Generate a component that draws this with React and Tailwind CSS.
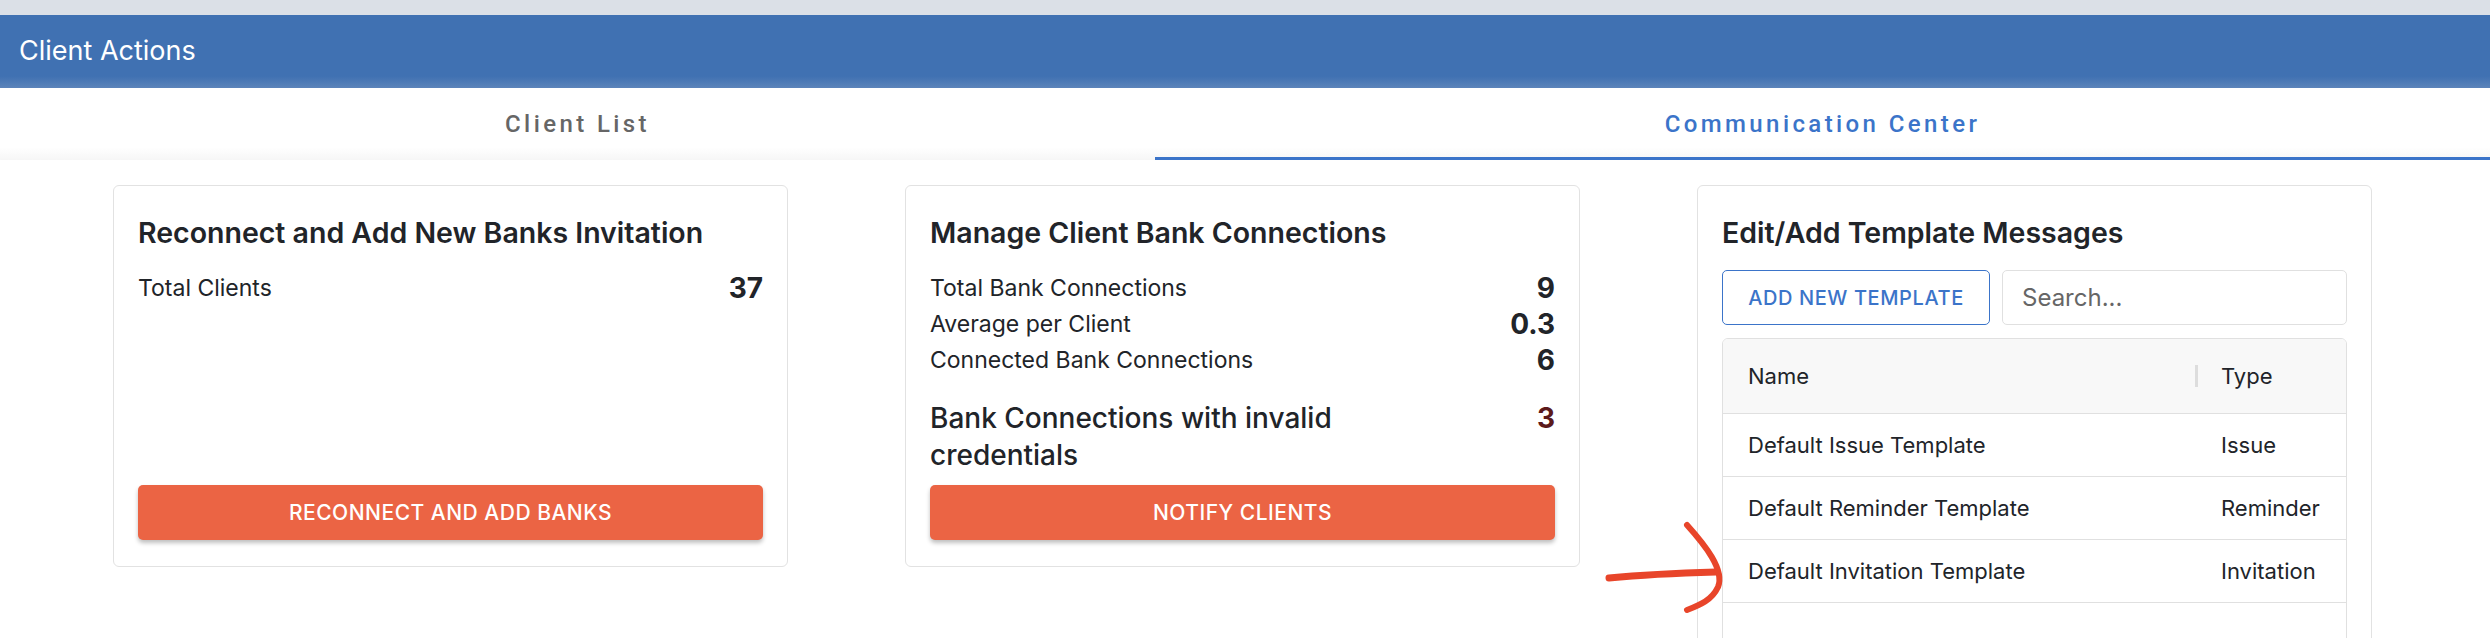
import React, { useState } from 'react';

const stats = [
  { label: 'Total Bank Connections', value: '9' },
  { label: 'Average per Client', value: '0.3' },
  { label: 'Connected Bank Connections', value: '6' },
];

const templates = [
  { name: 'Default Issue Template', type: 'Issue' },
  { name: 'Default Reminder Template', type: 'Reminder' },
  { name: 'Default Invitation Template', type: 'Invitation' },
];

function ActionButton({ children }) {
  return (
    <button className="mt-auto h-[55px] w-full rounded-[5px] bg-[#eb6444] text-[21px] font-medium tracking-[0.5px] text-white shadow-[0_3px_4px_rgba(0,0,0,0.25)]">
      {children}
    </button>
  );
}

function Card({ title, className, children }) {
  return (
    <div className={`flex flex-col rounded-[6px] border border-[#e2e2e2] bg-white px-[24px] pt-[30px] ${className}`}>
      <h3 className="mb-[20px] text-[28.5px] font-semibold leading-[34px] text-[#212429]">{title}</h3>
      {children}
    </div>
  );
}

// hand-drawn red arrow pointing at the invitation row
function ArrowMark() {
  return (
    <svg className="pointer-events-none absolute left-[1600px] top-[515px]" width="130" height="105" viewBox="0 0 130 105" fill="none">
      <path d="M9 63 C40 60 80 58 116 57" stroke="#e8452a" strokeWidth="7" strokeLinecap="round" />
      <path d="M87 10 C105 30 125 55 118 72 C112 85 100 90 87 95" stroke="#e8452a" strokeWidth="6" strokeLinecap="round" />
    </svg>
  );
}

export default function App() {
  const [tab, setTab] = useState(1);
  const [search, setSearch] = useState('');

  return (
    <div className="relative min-h-screen bg-white font-['Inter',sans-serif] text-[#212429]">
      <div className="h-[15px] bg-[#dbe0e7]" />
      <header className="flex h-[73px] items-center bg-[linear-gradient(to_bottom,#4071b2_84%,#5c84ba)] px-[19px]">
        <h1 className="text-[27px] font-normal text-white">Client Actions</h1>
      </header>

      <nav className="flex h-[72px] bg-[linear-gradient(to_bottom,#ffffff_82%,#f6f6f6)] font-['Roboto',sans-serif]">
        <button
          onClick={() => setTab(0)}
          className={`relative w-[1155px] text-[24px] font-medium tracking-[3.4px] ${tab === 0 ? 'text-[#3b74c9]' : 'text-[#666666]'}`}
        >
          Client List
          {tab === 0 && <span className="absolute inset-x-0 bottom-0 h-[3px] bg-[#3b74c9]" />}
        </button>
        <button
          onClick={() => setTab(1)}
          className={`relative flex-1 text-[24px] font-medium tracking-[3.4px] ${tab === 1 ? 'text-[#3b74c9]' : 'text-[#666666]'}`}
        >
          Communication Center
          {tab === 1 && <span className="absolute inset-x-0 bottom-0 h-[3px] bg-[#3b74c9]" />}
        </button>
      </nav>

      <main className="flex items-start gap-[117px] pl-[113px] pt-[25px]">
        <Card title="Reconnect and Add New Banks Invitation" className="h-[382px] w-[675px] pb-[26px]">
          <div className="flex h-[36px] items-center justify-between">
            <span className="text-[23px]">Total Clients</span>
            <span className="text-[28px] font-bold">37</span>
          </div>
          <ActionButton>RECONNECT AND ADD BANKS</ActionButton>
        </Card>

        <Card title="Manage Client Bank Connections" className="h-[382px] w-[675px] pb-[26px]">
          {stats.map((s) => (
            <div key={s.label} className="flex h-[36px] items-center justify-between">
              <span className="text-[23px]">{s.label}</span>
              <span className="text-[28px] font-bold">{s.value}</span>
            </div>
          ))}
          <div className="mt-[22px] flex items-start justify-between">
            <span className="w-[430px] text-[28px] font-medium leading-[37px]">
              Bank Connections with invalid credentials
            </span>
            <span className="text-[28px] font-bold leading-[37px] text-[#5c1a1b]">3</span>
          </div>
          <ActionButton>NOTIFY CLIENTS</ActionButton>
        </Card>

        <Card title="Edit/Add Template Messages" className="w-[675px] pb-[24px]">
          <div className="flex gap-[12px]">
            <button className="h-[55px] w-[268px] shrink-0 whitespace-nowrap rounded-[5px] border border-[#3b74c9] text-[20px] font-medium tracking-[0.6px] text-[#3b74c9]">
              ADD NEW TEMPLATE
            </button>
            <input
              value={search}
              onChange={(e) => setSearch(e.target.value)}
              placeholder="Search..."
              className="h-[55px] min-w-0 flex-1 rounded-[5px] border border-[#e0e0e0] px-[19px] text-[24px] outline-none placeholder:text-[#666666]"
            />
          </div>
          <div className="mt-[13px] overflow-hidden rounded-[6px] border border-[#e0e0e0]">
            <div className="flex h-[75px] items-center border-b border-[#e0e0e0] bg-[#f8f8f8] text-[22px]">
              <div className="w-[472px] pl-[25px]">Name</div>
              <div className="flex items-center">
                <span className="h-[22px] w-[3px] bg-[#dddddd]" />
                <span className="pl-[23px]">Type</span>
              </div>
            </div>
            {templates.map((t) => (
              <div key={t.name} className="flex h-[63px] items-center border-b border-[#e0e0e0] text-[22px]">
                <div className="w-[472px] pl-[25px]">{t.name}</div>
                <div className="pl-[26px]">{t.type}</div>
              </div>
            ))}
            <div className="h-[60px]" />
          </div>
        </Card>
      </main>

      <ArrowMark />
    </div>
  );
}
